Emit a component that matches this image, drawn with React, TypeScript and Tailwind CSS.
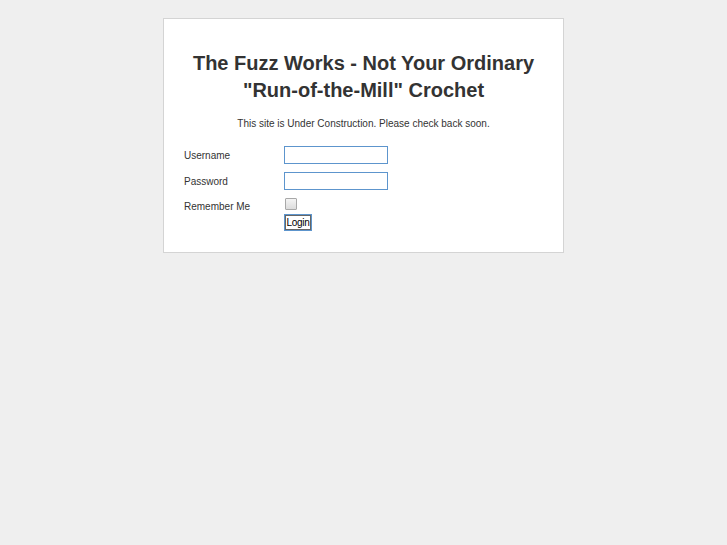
export default function App() {
  return (
    <div className="min-h-[545px] bg-[#efefef] pt-[18px] font-['Liberation_Sans',Arial,sans-serif] text-[#333]">
      <div className="mx-auto w-[401px] border border-[#d4d4d4] bg-white px-[20px] pb-[21px] pt-[31px]">
        <h1 className="text-center text-[20px] font-bold leading-[27px] text-[#333]">
          The Fuzz Works - Not Your Ordinary
          <br />
          "Run-of-the-Mill" Crochet
        </h1>
        <p className="mt-[13px] text-center text-[10px] leading-[14px]">
          This site is Under Construction. Please check back soon.
        </p>
        <form className="mt-[15px] flex flex-col text-[10px]">
          <div className="flex h-[18px] items-center">
            <label className="w-[100px]">Username</label>
            <input
              type="text"
              className="h-[18px] w-[104px] border border-[#5d95cd] bg-white px-1 text-[10px] outline-none"
            />
          </div>
          <div className="mt-[8px] flex h-[18px] items-center">
            <label className="w-[100px]">Password</label>
            <input
              type="password"
              className="h-[18px] w-[104px] border border-[#5d95cd] bg-white px-1 text-[10px] outline-none"
            />
          </div>
          <div className="mt-[8px] flex h-[13px] items-start">
            <label className="mt-[2px] w-[100px] leading-[13px]">Remember Me</label>
            <span className="ml-[1px] block h-[12px] w-[12px] rounded-[1px] border border-[#a8a8a8] bg-gradient-to-b from-[#f4f4f4] to-[#dcdcdc]" />
          </div>
          <div className="mt-[3px] flex">
            <span className="w-[100px]" />
            <button
              type="button"
              className="h-[17px] w-[28px] border border-[#5d95cd] bg-white p-0 text-[10px] leading-[13px] tracking-[-0.3px] text-black shadow-[inset_0_0_0_1px_#666]"
            >
              Login
            </button>
          </div>
        </form>
      </div>
    </div>
  )
}
